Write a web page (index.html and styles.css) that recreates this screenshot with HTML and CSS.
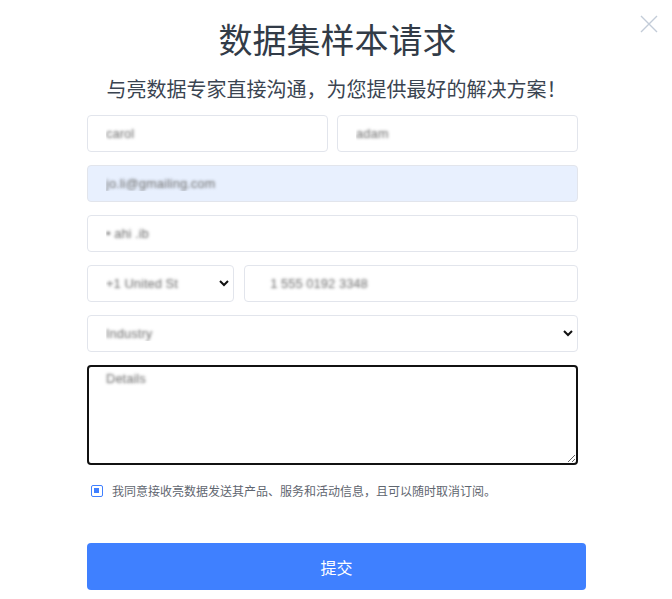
FILE: index.html
```html
<!DOCTYPE html>
<html>

<head>
    <title>数据集样本请求</title>
    <link rel="stylesheet" href="styles.css">
</head>

<body>
    <div class="close-btn">
        <svg width="18" height="18" viewBox="0 0 18 18">
            <path d="M1 1 L17 17 M17 1 L1 17" stroke="#c3ccd8" stroke-width="1.4" fill="none" />
        </svg>
    </div>

    <div class="dialog">
        <h1 class="title">数据集样本请求</h1>
        <p class="subtitle">与亮数据专家直接沟通，为您提供最好的解决方案！</p>

        <form class="sample-form">
            <div class="row">
                <input class="field" type="text" value="carol" />
                <input class="field" type="text" value="adam" />
            </div>
            <div class="row">
                <input class="field autofill" type="text" value="jo.li@gmailing.com" />
            </div>
            <div class="row">
                <input class="field" type="text" value="• ahi .ib" />
            </div>
            <div class="row">
                <select class="field country">
                    <option>+1 United St</option>
                </select>
                <input class="field" type="text" value="  1 555 0192 3348" />
            </div>
            <div class="row">
                <select class="field">
                    <option>Industry</option>
                </select>
            </div>
            <div class="row">
                <textarea class="field message">Details</textarea>
            </div>

            <label class="consent">
                <span class="check"></span>
                我同意接收亮数据发送其产品、服务和活动信息，且可以随时取消订阅。
            </label>

            <button type="button" class="submit">提交</button>
        </form>
    </div>
</body>

</html>
```

FILE: styles.css
```css
body {
    margin: 0;
    background-color: white;
    font-family: "Noto Sans CJK SC", "Noto Sans", sans-serif;
}

.close-btn {
    position: absolute;
    top: 14px;
    left: 640px;
}

.dialog {
    width: 499px;
    margin: 0 auto;
    padding-top: 14px;
    padding-left: 1px;
}

.title {
    margin: 0;
    text-align: center;
    font-size: 34px;
    font-weight: 400;
    line-height: 50px;
    color: #323b47;
    padding-left: 2px;
}

.subtitle {
    margin: 11px 0 0 0;
    text-align: center;
    font-size: 20px;
    line-height: 28px;
    color: #3a4451;
}

.sample-form {
    margin-top: 12px;
}

.row {
    display: flex;
    gap: 9px;
    width: 491px;
    margin-bottom: 13px;
}

.field {
    flex: 1;
    box-sizing: border-box;
    height: 37px;
    border: 1px solid #e2e5ec;
    border-radius: 4px;
    padding: 0 18px;
    font-size: 13px;
    font-family: "Liberation Sans", sans-serif;
    color: transparent;
    text-shadow: 0 0 3px #6c6c6c;
    background-color: white;
    outline: 0;
}

.autofill {
    background-color: #e8f0fe;
}

.country {
    flex: 0 0 147px;
    margin-right: 1px;
}

select.field {
    appearance: none;
    padding: 0 24px 0 18px;
    background-image: url("data:image/svg+xml;utf8,<svg xmlns='http://www.w3.org/2000/svg' width='10' height='7' viewBox='0 0 10 7'><path d='M1 1 L5 5 L9 1' stroke='%23111' stroke-width='2' fill='none'/></svg>");
    background-repeat: no-repeat;
    background-position: right 4px center;
}

.message {
    height: 100px;
    border: 2px solid #111;
    padding: 4px 17px;
    resize: vertical;
}

.consent {
    display: flex;
    align-items: center;
    gap: 9px;
    margin-top: 17px;
    padding-left: 4px;
    font-size: 12px;
    color: #5f6670;
}

.check {
    box-sizing: border-box;
    width: 12px;
    height: 12px;
    border: 1.5px solid #4080ff;
    border-radius: 2px;
    position: relative;
}

.check::after {
    content: "";
    position: absolute;
    left: 2px;
    top: 2px;
    width: 5px;
    height: 5px;
    background-color: #4080ff;
}

.submit {
    display: block;
    width: 499px;
    height: 47px;
    margin-top: 44px;
    border: 0;
    border-radius: 4px;
    background-color: #3f80ff;
    color: white;
    font-size: 16px;
    font-family: "Noto Sans CJK SC", sans-serif;
}
```
